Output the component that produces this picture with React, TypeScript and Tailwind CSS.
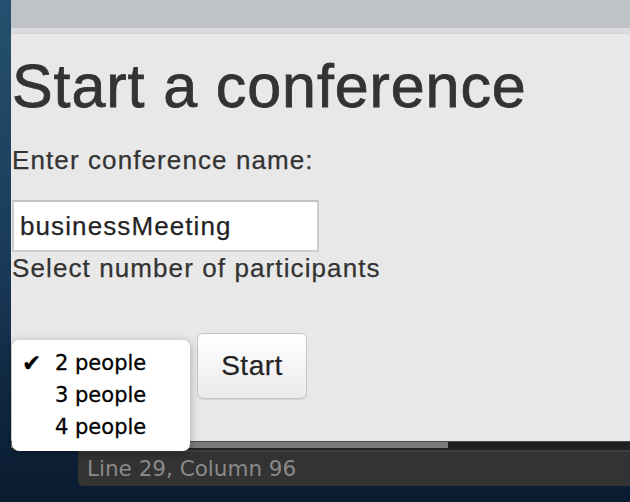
import { useState } from 'react';

const options = ['2 people', '3 people', '4 people'];

const App = () => {
  const [name, setName] = useState('businessMeeting');
  const [selected, setSelected] = useState('2 people');

  return (
    <div className="w-[630px] h-[502px] overflow-hidden flex bg-gradient-to-b from-[#26506f] via-[#1a3b5a] to-[#0a1b30]">
      {/* desktop edge */}
      <div className="w-[11px] shrink-0" />

      <div className="flex-1 flex flex-col">
        {/* browser chrome */}
        <div className="h-[28px] bg-[#bfc3c7]" />
        <div className="h-[6px] bg-[#dcdcdc] border-b border-[#d5d5d5]" />

        {/* page */}
        <div
          className="h-[407px] bg-[#e8e8e8] pl-[1px] text-[#333] tracking-[1.1px] [-webkit-text-stroke:0.25px_#333]"
          style={{ fontFamily: '"Liberation Sans", Arial, sans-serif' }}
        >
          <h1 className="mt-[22px] text-[61px] leading-none tracking-[0.9px] [-webkit-text-stroke:0.8px_#333]">
            Start a conference
          </h1>
          <p className="mt-[30px] text-[26px] leading-none">Enter conference name:</p>
          <input
            value={name}
            onChange={(e) => setName(e.target.value)}
            className="mt-[27px] block w-[307px] h-[52px] bg-white border-2 border-[#cdcdcd] border-t-[#c2c2c2] pl-[6px] text-[26px] text-[#222] outline-none"
          />
          <p className="mt-[3px] text-[26px] leading-none">Select number of participants</p>

          <div className="mt-[52px] flex items-start">
            {/* select with its open menu */}
            <div className="relative w-[185px] h-[40px] shrink-0">
              <div
                className="absolute left-0 top-[7px] w-[178px] bg-white rounded-[7px] shadow-[0_2px_10px_rgba(0,0,0,0.3)] pt-[7px] pb-[8px] pl-[10px] z-10 tracking-normal [-webkit-text-stroke:0.3px_#000]"
                style={{ fontFamily: '"DejaVu Sans", Verdana, sans-serif' }}
              >
                {options.map((opt) => (
                  <div
                    key={opt}
                    onClick={() => setSelected(opt)}
                    className="h-[32px] flex items-center text-[21px] leading-[32px] text-black cursor-default"
                  >
                    <span className="w-[33px] text-[23px] leading-[32px]">{selected === opt ? '✔' : ''}</span>
                    <span>{opt}</span>
                  </div>
                ))}
              </div>
            </div>
            <button className="w-[110px] h-[66px] rounded-[6px] border border-[#c6c6c6] bg-gradient-to-b from-white to-[#ebebeb] shadow-[0_1px_1px_rgba(0,0,0,0.08)] text-[28px] text-[#222] tracking-[0.5px]">
              Start
            </button>
          </div>
        </div>

        {/* horizontal scrollbar */}
        <div className="h-[1px] bg-[#4a4a4a]" />
        <div className="h-[6px] flex bg-[#1f1f1f]">
          <div className="w-[437px] bg-[#7a7a7a]" />
        </div>
        <div className="h-[2px] bg-[#222]" />

        {/* editor status bar behind */}
        <div
          className="ml-[67px] h-[36px] bg-[#333] border-t-2 border-[#3c3c3c] rounded-bl-[5px] pl-[9px] text-[21.5px] leading-[34px] text-[#8a8a8a]"
          style={{ fontFamily: '"DejaVu Sans", Verdana, sans-serif' }}
        >
          Line 29, Column 96
        </div>
      </div>
    </div>
  );
};

export default App;
